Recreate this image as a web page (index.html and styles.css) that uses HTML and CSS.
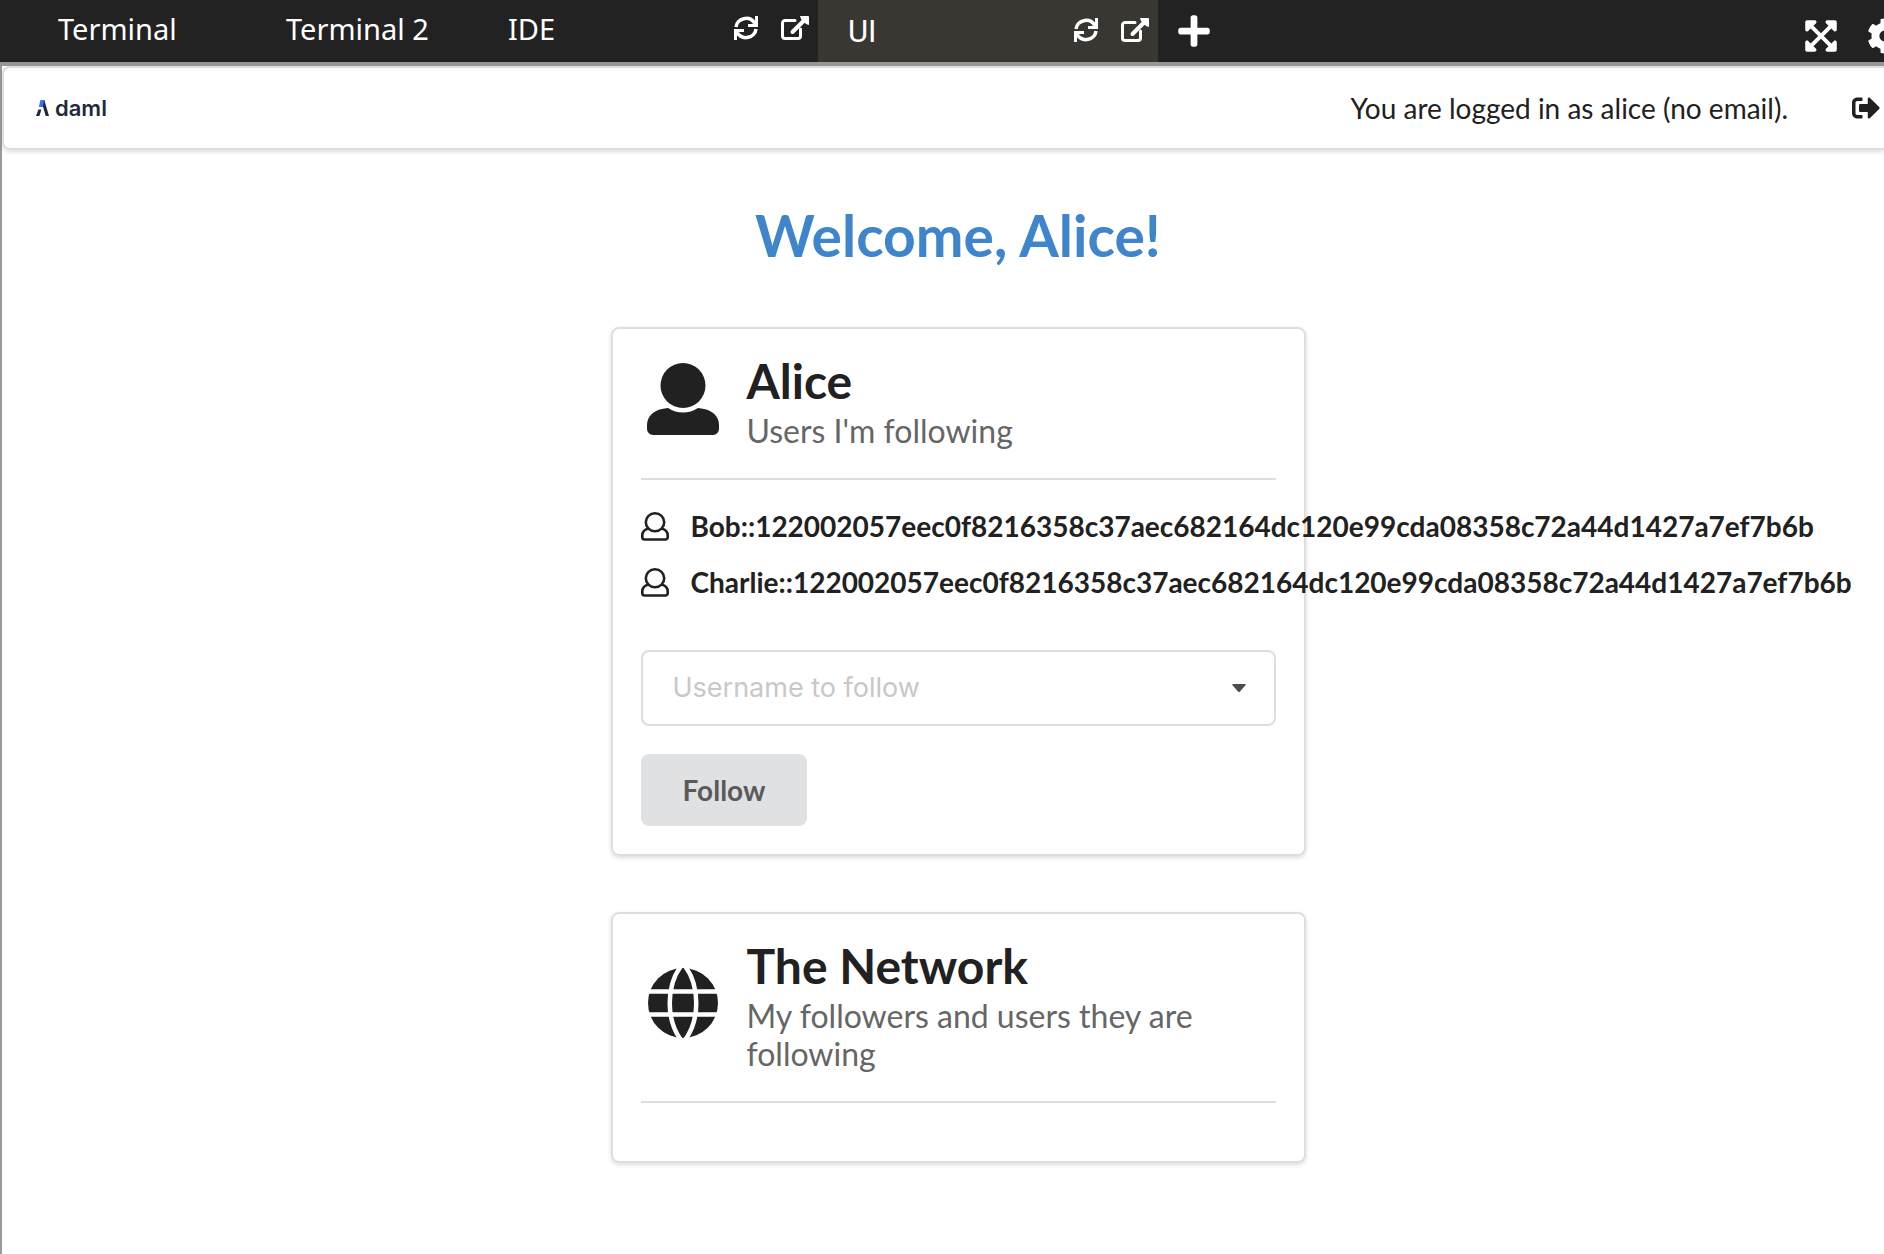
FILE: index.html
```html
<!DOCTYPE html>
<html lang="en">
<head>
<meta charset="utf-8">
<meta name="viewport" content="width=device-width, initial-scale=1">
<title>Daml App</title>
<link rel="stylesheet" href="styles.css">
</head>
<body>
<svg class="sprite" aria-hidden="true">
  <symbol id="refresh" viewBox="0 0 24 24">
    <path d="M2 11A10 9.500 0 0 1 20.500 7M22 13A10 9.500 0 0 1 3.500 17" fill="none" stroke="currentColor" stroke-width="3.500"/>
    <path d="M21 0h3v11H14V8h5l2-2zM3 24H0V13h10v3H5l-2 2z" fill="currentColor"/>
  </symbol>
  <symbol id="external" viewBox="0 0 28 24">
    <path d="M14 4.500H4A2.500 2.500 0 0 0 1.500 7v13A2.500 2.500 0 0 0 4 22.500h13A2.500 2.500 0 0 0 19.500 20v-7" fill="none" stroke="currentColor" stroke-width="3" stroke-linecap="round"/>
    <path d="M11.500 16L24 3.500" fill="none" stroke="currentColor" stroke-width="4" stroke-linecap="round"/>
    <path d="M19 0h8q1 0 1 1v8l-3-1-5-5z" fill="currentColor"/>
  </symbol>
  <symbol id="user-outline" viewBox="0 0 28 29">
    <path d="M7.500 16.500C3.500 17.500 1.300 20 1.300 23.500v1.700a2.300 2.300 0 0 0 2.300 2.300h20.800a2.300 2.300 0 0 0 2.300-2.300v-1.700C26.700 20 24.500 17.500 20.500 16.500" fill="none" stroke="currentColor" stroke-width="2.600"/>
    <ellipse cx="14" cy="10.300" rx="9.200" ry="9" fill="none" stroke="currentColor" stroke-width="2.600"/>
  </symbol>
</svg>

<header class="tabbar">
  <nav class="tabs" aria-label="Tabs">
    <div class="tab"><button class="tab-name" type="button">Terminal</button></div>
    <div class="tab"><button class="tab-name" type="button">Terminal 2</button></div>
    <div class="tab">
      <button class="tab-name" type="button">IDE</button>
      <button class="icon-button" type="button" aria-label="Refresh IDE"><svg width="24" height="24"><use href="#refresh"/></svg></button>
      <button class="icon-button" type="button" aria-label="Open IDE in new window"><svg width="28" height="24"><use href="#external"/></svg></button>
    </div>
    <div class="tab tab-active">
      <button class="tab-name" type="button">UI</button>
      <button class="icon-button" type="button" aria-label="Refresh UI"><svg width="24" height="24"><use href="#refresh"/></svg></button>
      <button class="icon-button" type="button" aria-label="Open UI in new window"><svg width="28" height="24"><use href="#external"/></svg></button>
    </div>
    <button class="icon-button add-tab" type="button" aria-label="Add tab"><svg width="32" height="36" viewBox="0 0 448 512"><path fill="currentColor" d="M416 208H272V64c0-17.670-14.330-32-32-32h-32c-17.670 0-32 14.330-32 32v144H32c-17.670 0-32 14.330-32 32v32c0 17.670 14.330 32 32 32h144v144c0 17.670 14.330 32 32 32h32c17.670 0 32-14.330 32-32V304h144c17.670 0 32-14.330 32-32v-32c0-17.670-14.330-32-32-32z"/></svg></button>
  </nav>
  <div class="tools">
    <button class="icon-button" type="button" aria-label="Full screen"><svg width="32" height="36" viewBox="0 0 448 512"><path fill="currentColor" d="M448 344v112a24 24 0 0 1-24 24H312c-21.390 0-32.090-25.900-17-41l36.200-36.200L224 295.600 116.770 402.900 153 439c15.090 15.100 4.390 41-17 41H24a24 24 0 0 1-24-24V344c0-21.400 25.890-32.100 41-17l36.190 36.200L184.460 256 77.180 148.700 41 185c-15.100 15.100-41 4.400-41-17V56a24 24 0 0 1 24-24h112c21.390 0 32.090 25.900 17 41l-36.200 36.200L224 216.400l107.230-107.300L295 73c-15.090-15.100-4.390-41 17-41h112a24 24 0 0 1 24 24v112c0 21.400-25.890 32.100-41 17l-36.190-36.200L263.540 256l107.280 107.300L407 327.100c15.100-15.200 41-4.500 41 16.900z"/></svg></button>
    <button class="icon-button" type="button" aria-label="Settings"><svg width="36" height="36" viewBox="0 0 512 512"><path fill="currentColor" d="M487.400 315.700l-42.600-24.600c4.300-23.200 4.300-47 0-70.200l42.600-24.600c4.900-2.800 7.100-8.600 5.500-14-11.100-35.600-30-67.800-54.700-94.600-3.800-4.100-10-5.100-14.800-2.300L380.800 110c-17.900-15.400-38.500-27.300-60.800-35.100V25.800c0-5.600-3.900-10.500-9.400-11.700-36.700-8.200-74.300-7.800-109.200 0-5.500 1.200-9.400 6.100-9.400 11.700V75c-22.200 7.900-42.800 19.800-60.800 35.100L88.700 85.500c-4.900-2.800-11-1.900-14.800 2.300-24.700 26.700-43.600 58.900-54.700 94.600-1.700 5.400.6 11.200 5.500 14L67.300 221c-4.300 23.200-4.300 47 0 70.200l-42.600 24.600c-4.900 2.800-7.100 8.600-5.500 14 11.100 35.600 30 67.800 54.700 94.600 3.800 4.100 10 5.100 14.800 2.300l42.600-24.600c17.900 15.400 38.500 27.300 60.800 35.100v49.200c0 5.600 3.900 10.500 9.400 11.700 36.700 8.200 74.300 7.800 109.200 0 5.500-1.200 9.400-6.100 9.400-11.700v-49.200c22.200-7.900 42.800-19.800 60.800-35.100l42.600 24.600c4.900 2.800 11 1.900 14.800-2.300 24.700-26.700 43.600-58.900 54.700-94.600 1.500-5.500-.7-11.300-5.600-14.100zM256 336c-44.100 0-80-35.900-80-80s35.900-80 80-80 80 35.900 80 80-35.900 80-80 80z"/></svg></button>
  </div>
</header>

<div class="frame">
  <div class="menu">
    <a class="logo" href="#" aria-label="daml">
      <svg width="14" height="16" viewBox="0 0 14 16" aria-hidden="true"><path fill="#3d6ff0" d="M4.500 0h4.300L6.800 7H2.800z"/><path fill="#1f2a3c" d="M8.300 0L13 16H9.700L6.800 6zM2.400 9.500h3L3.400 16H0z"/></svg>
      <span>daml</span>
    </a>
    <span class="status">You are logged in as alice (no email).</span>
    <button class="icon-button logout" type="button" aria-label="Log out"><svg width="28" height="28" viewBox="0 0 512 512"><path fill="currentColor" d="M497 273L329 441c-15 15-41 4.500-41-17v-96H152c-13.300 0-24-10.700-24-24v-96c0-13.300 10.700-24 24-24h136v-96c0-21.400 25.900-32 41-17l168 168c9.300 9.400 9.300 24.600 0 34zM192 436v-40c0-6.600-5.400-12-12-12H96c-17.700 0-32-14.300-32-32V160c0-17.700 14.300-32 32-32h84c6.600 0 12-5.400 12-12V76c0-6.600-5.400-12-12-12H96c-53 0-96 43-96 96v192c0 53 43 96 96 96h84c6.600 0 12-5.400 12-12z"/></svg></button>
  </div>

  <main class="content">
    <h1 class="welcome">Welcome, Alice!</h1>

    <section class="card">
      <div class="card-header">
        <svg class="card-icon" width="72" height="72" viewBox="0 0 72 72" aria-hidden="true"><circle cx="36" cy="22.500" r="22.500" fill="currentColor"/><path fill="currentColor" d="M21 45Q28 49.500 36 49.500T51 45C65 46 72 53 72 62v4a6 6 0 0 1-6 6H6a6 6 0 0 1-6-6v-4C0 53 7 46 21 45z"/></svg>
        <div>
          <h2 class="card-title">Alice</h2>
          <p class="card-subtitle">Users I'm following</p>
        </div>
      </div>
      <ul class="users">
        <li class="user"><svg width="28" height="29" aria-hidden="true"><use href="#user-outline"/></svg><span>Bob::122002057eec0f8216358c37aec682164dc120e99cda08358c72a44d1427a7ef7b6b</span></li>
        <li class="user"><svg width="28" height="29" aria-hidden="true"><use href="#user-outline"/></svg><span>Charlie::122002057eec0f8216358c37aec682164dc120e99cda08358c72a44d1427a7ef7b6b</span></li>
      </ul>
      <form class="follow">
        <div class="dropdown">
          <select class="select" aria-label="Username to follow">
            <option value="">Username to follow</option>
          </select>
          <svg class="caret" width="14" height="8" viewBox="0 0 14 8" aria-hidden="true"><path fill="#4d4d4d" d="M1 0h12q1.500 0 .5 1.300L8 7.500q-1 1-2 0L.5 1.300Q-.5 0 1 0z"/></svg>
        </div>
        <button class="follow-button" type="button">Follow</button>
      </form>
    </section>

    <section class="card">
      <div class="card-header">
        <svg class="card-icon" width="72" height="72" viewBox="-1 -1 72 72" aria-hidden="true"><circle cx="35" cy="35" r="35" fill="currentColor"/><path fill="none" stroke="#fff" stroke-width="4.500" d="M33-2C18 18 18 52 33 72M37-2C52 18 52 52 37 72M-1 23.500h72M-1 46.500h72"/></svg>
        <div>
          <h2 class="card-title">The Network</h2>
          <p class="card-subtitle">My followers and users they are following</p>
        </div>
      </div>
      <ul class="users"></ul>
    </section>
  </main>
</div>
</body>
</html>
```

FILE: styles.css
```css
* {
  box-sizing: border-box;
}

body {
  margin: 0;
  min-height: 100vh;
  display: flex;
  flex-direction: column;
  overflow-x: hidden;
  background: #fff;
  color: #212121;
  font: 28px/40px Lato, sans-serif;
}

h1, h2, p, ul {
  margin: 0;
  padding: 0;
}

svg {
  display: block;
  flex: none;
}

button {
  margin: 0;
  padding: 0;
  border: 0;
  background: none;
  color: inherit;
  font: inherit;
}

.sprite {
  position: absolute;
  width: 0;
  height: 0;
}

/* Tab bar */
.tabbar {
  display: flex;
  justify-content: space-between;
  height: 66px;
  padding-left: 28px;
  border-bottom: 4px solid #999697;
  background: #222;
  color: #fff;
  overflow: hidden;
}

.tabs {
  display: grid;
  grid-template-columns: 228px 222px 340px 340px 72px;
}

.tab {
  display: flex;
  align-items: center;
  gap: 23px;
  padding: 0 9px 6px 30px;
}

.tab-name {
  flex: 1;
  padding-top: 2px;
  text-align: left;
  font: 29px/40px "Noto Sans", sans-serif;
}

.tab-active {
  padding-bottom: 2px;
  background: #393731;
}

.tab-active .tab-name {
  padding-top: 4px;
  font-family: Roboto, sans-serif;
  font-size: 31px;
}

.add-tab {
  justify-self: center;
}

.tools {
  display: flex;
  align-items: center;
  gap: 30px;
  padding-top: 10px;
  margin-right: -19px;
}

/* Application frame */
.frame {
  flex: 1;
  border-left: 2px solid #999;
}

.menu {
  display: flex;
  align-items: center;
  height: 84px;
  padding: 0 4px 0 32px;
  border: 2px solid #dedede;
  border-right: 0;
  border-radius: 8px 0 0 8px;
  box-shadow: 0 2px 4px rgba(34, 36, 38, .15);
}

.logo {
  display: flex;
  align-items: center;
  gap: 5px;
  margin-right: auto;
  color: #1f2a3c;
  font: 600 22px/24px Inter, sans-serif;
  text-decoration: none;
}

.logout {
  margin-left: 64px;
}

.content {
  display: flex;
  flex-direction: column;
  align-items: center;
  gap: 56px;
  padding: 49px 0 56px 30px;
}

.welcome {
  color: #3f85cb;
  font-size: 57px;
  line-height: 72px;
}

.card {
  width: 100%;
  max-width: 695px;
  padding: 24px 28px 28px;
  border: 2px solid #dedede;
  border-radius: 8px;
  box-shadow: 0 2px 4px rgba(34, 36, 38, .15);
}

.card-header {
  display: flex;
  align-items: center;
  gap: 28px;
  padding: 0 6px 28px;
  border-bottom: 2px solid #dedede;
}

.card-icon {
  margin-bottom: 5px;
}

.card-title {
  margin-bottom: 3px;
  font-size: 48px;
  line-height: 56px;
}

.card-subtitle {
  color: #666;
  font-size: 32px;
  line-height: 38px;
}

.users {
  display: flex;
  flex-direction: column;
  gap: 16px;
  padding: 26px 0 4px;
  list-style: none;
}

.user {
  display: flex;
  align-items: center;
  gap: 22px;
  font-weight: 700;
  white-space: nowrap;
}

.follow {
  display: flex;
  flex-direction: column;
  align-items: flex-start;
  gap: 28px;
  padding-top: 44px;
}

.dropdown {
  position: relative;
  width: 100%;
}

.select {
  display: block;
  width: 100%;
  height: 76px;
  padding: 0 60px 0 30px;
  border: 2px solid #dedede;
  border-radius: 8px;
  appearance: none;
  background: #fff;
  color: #c8c8c8;
  font: 27px/40px Inter, sans-serif;
}

.caret {
  position: absolute;
  top: 34px;
  right: 30px;
  pointer-events: none;
}

.follow-button {
  height: 72px;
  padding: 0 42px;
  border-radius: 8px;
  background: #e0e1e2;
  color: #5a5a5a;
  font-weight: 700;
}
```
